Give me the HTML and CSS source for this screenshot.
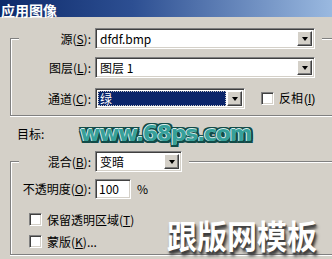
FILE: index.html
```html
<!DOCTYPE html>
<html>
<head>
<meta charset="utf-8">
<link rel="stylesheet" href="styles.css">
</head>
<body>
<div class="dialog">
  <div class="titlebar">应用图像</div>

  <fieldset class="group group-source">
    <legend class="legend">
      <div class="row">
        <span class="label label-legend">源(<u>S</u>):</span>
        <div class="combo combo-wide">
          <span class="combo-text">dfdf.bmp</span>
          <span class="combo-btn"><i class="arrow"></i></span>
        </div>
      </div>
    </legend>
    <div class="row">
      <span class="label">图层(<u>L</u>):</span>
      <div class="combo combo-wide">
        <span class="combo-text">图层 1</span>
        <span class="combo-btn"><i class="arrow"></i></span>
      </div>
    </div>
    <div class="row row-gap">
      <span class="label">通道(<u>C</u>):</span>
      <div class="combo combo-channel">
        <span class="combo-text combo-selected">绿</span>
        <span class="combo-btn"><i class="arrow"></i></span>
      </div>
      <span class="box box-invert"></span>
      <span class="invert-text">反相<span class="key">(<u>I</u>)</span></span>
    </div>
  </fieldset>

  <div class="target-row">
    <span class="target-label">目标:</span>
    <span class="logo">www.68ps.com</span>
  </div>

  <fieldset class="group group-blend">
    <legend class="legend">
      <div class="row">
        <span class="label label-legend">混合(<u>B</u>):</span>
        <div class="combo combo-blend">
          <span class="combo-text">变暗</span>
          <span class="combo-btn"><i class="arrow"></i></span>
        </div>
      </div>
    </legend>
    <div class="row">
      <span class="label">不透明度(<u>O</u>):</span>
      <div class="field">100</div>
      <span class="pct">%</span>
    </div>
    <div class="check check-first"><span class="box"></span><span class="check-text">保留透明区域(<u>T</u>)</span></div>
    <div class="check check-second"><span class="box"></span><span class="check-text">蒙版(<u>K</u>)...</span></div>
  </fieldset>

  <div class="watermark">跟版网模板</div>
</div>
</body>
</html>
```

FILE: styles.css
```css
* { box-sizing: border-box; }
html, body { margin: 0; padding: 0; }
body {
  width: 332px;
  height: 259px;
  overflow: hidden;
  background: #d4d0c8;
  font-family: "Noto Sans CJK SC", "DejaVu Sans", sans-serif;
  font-size: 12px;
  color: #000;
}
u { text-decoration: underline; text-underline-offset: 1px; }
.dialog {
  position: relative;
  width: 332px;
  height: 259px;
  overflow: hidden;
}
.titlebar {
  height: 17px;
  background: linear-gradient(to right, #0d2a6a 0%, #2d4f92 40%, #9ab9e0 100%);
  color: #fff;
  font-weight: bold;
  font-size: 14px;
  line-height: 20px;
  padding-left: 1px;
}
.group {
  margin: 11px -40px 0 10px;
  padding: 8px 0 6px 0;
  border: 1px solid #808080;
  box-shadow: inset 1px 1px 0 #fff, 0 1px 0 #fff;
  min-width: 0;
}
.group-blend { margin-top: 0; padding-top: 6px; }
.legend {
  margin-left: 8px;
  padding: 0 7px 0 0;
  background: #d4d0c8;
}
.row {
  display: flex;
  align-items: center;
  height: 21px;
}
.row-gap { margin-top: 10px; }
.label {
  width: 80px;
  text-align: right;
  margin-right: 4px;
  white-space: nowrap;
  line-height: 14px;
  flex: none;
}
.label-legend { width: 72px; }
.combo {
  display: flex;
  height: 21px;
  background: #fff;
  border: 1px solid;
  border-color: #808080 #fff #fff #808080;
  box-shadow: inset 1px 1px 0 #404040, inset -1px -1px 0 #d4d0c8;
  padding: 2px;
  flex: none;
}
.combo-wide { width: 220px; }
.combo-channel { width: 150px; }
.combo-blend { width: 87px; }
.combo-text {
  flex: 1;
  padding-left: 2px;
  line-height: 15px;
  white-space: nowrap;
}
.combo-selected {
  background: #0a246a;
  color: #fff;
  outline: 1px dotted #c8c8c8;
  outline-offset: -1px;
}
.combo-btn {
  width: 15px;
  height: 15px;
  margin-left: 1px;
  background: #d4d0c8;
  border: 1px solid;
  border-color: #fff #404040 #404040 #fff;
  box-shadow: inset -1px -1px 0 #808080;
  display: flex;
  align-items: center;
  justify-content: center;
}
.arrow {
  width: 0;
  height: 0;
  border-left: 3.5px solid transparent;
  border-right: 3.5px solid transparent;
  border-top: 4px solid #000;
  margin-top: 1px;
}
.check {
  display: flex;
  align-items: center;
  height: 13px;
  white-space: nowrap;
  flex: none;
}
.check-text { flex: none; white-space: nowrap; line-height: 14px; }
.box {
  width: 13px;
  height: 13px;
  background: #fff;
  border: 1px solid;
  border-color: #808080 #fff #fff #808080;
  box-shadow: inset 1px 1px 0 #404040, inset -1px -1px 0 #d4d0c8;
  margin-right: 5px;
  flex: none;
}
.box-invert { margin-left: 16px; }
.invert-text {
  flex: none;
  white-space: nowrap;
  line-height: 14px;
  color: #000;
  background: #d5d1c9;
  padding-right: 3px;
}
.key {
  font-family: "Liberation Sans", sans-serif;
  font-size: 12px;
  color: #000;
  margin-left: 1px;
}
.check-first { margin: 14px 0 0 18px; }
.check-second { margin: 9px 0 0 18px; }
.field {
  width: 36px;
  height: 20px;
  background: #fff;
  border: 1px solid;
  border-color: #808080 #fff #fff #808080;
  box-shadow: inset 1px 1px 0 #404040, inset -1px -1px 0 #d4d0c8;
  padding: 1px 3px;
  line-height: 16px;
  flex: none;
}
.pct { margin-left: 6px; }
.target-row {
  display: flex;
  align-items: center;
  height: 35px;
}
.target-label {
  width: 80px;
  padding-left: 17px;
  flex: none;
}
.logo {
  font-family: "DejaVu Sans", sans-serif;
  font-weight: bold;
  font-size: 22px;
  letter-spacing: -1.3px;
  color: #36a09b;
  text-shadow:
    -1px 0 0 #d8eeec, 0 -1px 0 #d8eeec,
    2px 0 0 #124b48, -2px 0 0 #124b48, 0 2px 0 #124b48, 0 -2px 0 #124b48,
    2px 2px 0 #124b48, -2px -2px 0 #124b48, 2px -2px 0 #124b48, -2px 2px 0 #124b48;
  line-height: 26px;
  white-space: nowrap;
}
.watermark {
  position: absolute;
  left: 167px;
  top: 216px;
  font-size: 30px;
  font-weight: bold;
  color: #fff;
  line-height: 36px;
  white-space: nowrap;
  transform: scaleY(1.08);
  transform-origin: left top;
  text-shadow: 2px 3px 3px #3a3a3a, 1px 1px 1px #555;
}
```
